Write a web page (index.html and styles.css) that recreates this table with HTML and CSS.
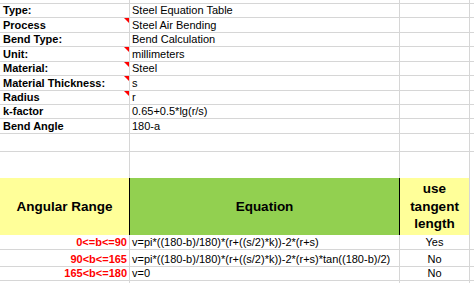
FILE: index.html
```html
<!DOCTYPE html>
<html>
<head>
<meta charset="utf-8">
<link rel="stylesheet" href="styles.css">
</head>
<body>
<div class="sheet">
  <div class="row h4"><div class="cell ca"></div><div class="cell cb"></div><div class="cell cc"></div><div class="cell cd"></div></div>
  <div class="row h14"><div class="cell ca">Type:</div><div class="cell cb">Steel Equation Table</div><div class="cell cc"></div><div class="cell cd"></div></div>
  <div class="row h15"><div class="cell ca note">Process</div><div class="cell cb">Steel Air Bending</div><div class="cell cc"></div><div class="cell cd"></div></div>
  <div class="row h14"><div class="cell ca">Bend Type:</div><div class="cell cb">Bend Calculation</div><div class="cell cc"></div><div class="cell cd"></div></div>
  <div class="row h15"><div class="cell ca note">Unit:</div><div class="cell cb">millimeters</div><div class="cell cc"></div><div class="cell cd"></div></div>
  <div class="row h14"><div class="cell ca note">Material:</div><div class="cell cb">Steel</div><div class="cell cc"></div><div class="cell cd"></div></div>
  <div class="row h15"><div class="cell ca note">Material Thickness:</div><div class="cell cb">s</div><div class="cell cc"></div><div class="cell cd"></div></div>
  <div class="row h14"><div class="cell ca note">Radius</div><div class="cell cb">r</div><div class="cell cc"></div><div class="cell cd"></div></div>
  <div class="row h14"><div class="cell ca">k-factor</div><div class="cell cb">0.65+0.5*lg(r/s)</div><div class="cell cc"></div><div class="cell cd"></div></div>
  <div class="row h15"><div class="cell ca">Bend Angle</div><div class="cell cb">180-a</div><div class="cell cc"></div><div class="cell cd"></div></div>
  <div class="row h18"><div class="cell ca"></div><div class="cell cb"></div><div class="cell cc"></div><div class="cell cd"></div></div>
  <div class="row h26 noline"><div class="cell ca"></div><div class="cell cb"></div><div class="cell cc"></div><div class="cell cd"></div></div>
  <div class="row hdr noline">
    <div class="cell ca">Angular Range</div>
    <div class="cell cb">Equation</div>
    <div class="cell cc">use<br>tangent<br>length</div>
    <div class="cell cd"></div>
  </div>
  <div class="row h15 data"><div class="cell ca">0&lt;=b&lt;=90</div><div class="cell cb">v=pi*((180-b)/180)*(r+((s/2)*k))-2*(r+s)</div><div class="cell cc">Yes</div><div class="cell cd"></div></div>
  <div class="row h17 data"><div class="cell ca">90&lt;b&lt;=165</div><div class="cell cb">v=pi*((180-b)/180)*(r+((s/2)*k))-2*(r+s)*tan((180-b)/2)</div><div class="cell cc">No</div><div class="cell cd"></div></div>
  <div class="row h14 data"><div class="cell ca">165&lt;b&lt;=180</div><div class="cell cb">v=0</div><div class="cell cc">No</div><div class="cell cd"></div></div>
  <div class="row h14"><div class="cell ca"></div><div class="cell cb"></div><div class="cell cc"></div><div class="cell cd"></div></div>
</div>
</body>
</html>
```
FILE: styles.css
```css
html, body {
  margin: 0;
  padding: 0;
  background: #fff;
}
body {
  font-family: "Liberation Sans", Arial, sans-serif;
  font-size: 11px;
  color: #000;
}
.sheet {
  width: 474px;
  height: 283px;
  overflow: hidden;
}
.row {
  display: flex;
  box-sizing: border-box;
  border-bottom: 1px solid #d6d6d6;
}
.row.noline {
  border-bottom: none;
}
.h4 { height: 4px; }
.h14 { height: 14px; }
.h15 { height: 15px; }
.h17 { height: 17px; }
.h18 { height: 18px; }
.h26 { height: 26px; }
.cell {
  box-sizing: border-box;
  border-right: 1px solid #d6d6d6;
  display: flex;
  align-items: flex-end;
  line-height: 13px;
  white-space: nowrap;
  position: relative;
  flex: none;
}
.ca {
  width: 130px;
  padding-left: 3px;
  font-weight: bold;
}
.cb {
  width: 270px;
  padding-left: 2px;
}
.cc {
  width: 70px;
  justify-content: center;
}
.cd {
  flex: 1;
  border-right: none;
}
.note::after {
  content: "";
  position: absolute;
  top: 0;
  right: 0;
  width: 0;
  height: 0;
  border-style: solid;
  border-width: 0 5px 5px 0;
  border-color: transparent #ff0000 transparent transparent;
}
.hdr {
  height: 57px;
}
.hdr .cell {
  align-items: center;
  justify-content: center;
  font-weight: bold;
  font-size: 13.5px;
  text-align: center;
  padding: 0;
}
.hdr .ca {
  background: #ffff99;
  border-right: 1px solid #000;
  line-height: 16px;
}
.hdr .cb {
  background: #92d050;
  border-right: 1px solid #000;
  line-height: 16px;
}
.hdr .cc {
  background: #ffff99;
  line-height: 17.5px;
}
.hdr .cd {
  background: #fff;
}
.data .ca {
  justify-content: flex-end;
  padding-left: 0;
  padding-right: 2px;
  color: #ff0000;
}
```
